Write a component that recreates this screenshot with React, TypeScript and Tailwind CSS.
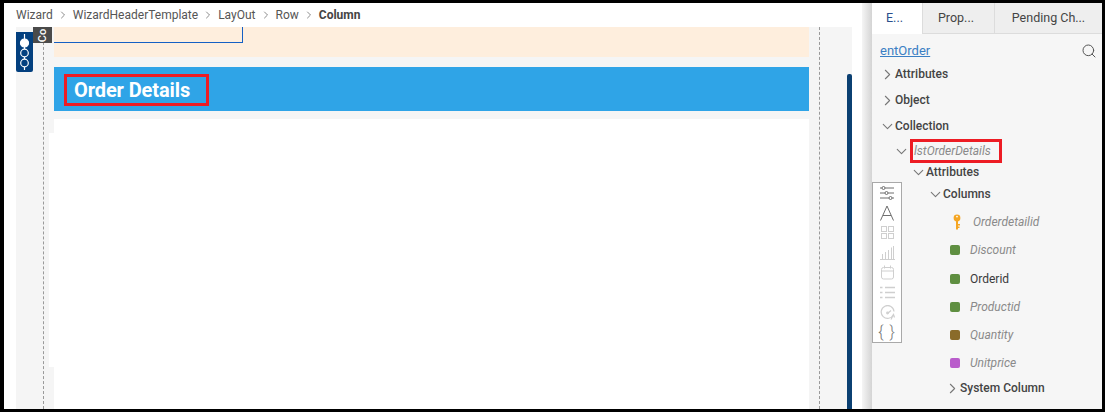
import { ChevronDown, ChevronRight, Search } from "lucide-react";

const crumbs = ["Wizard", "WizardHeaderTemplate", "LayOut", "Row"];

const KeyIcon = () => (
  <svg width="8" height="16" viewBox="0 0 8 16" className="ml-[3px]">
    <circle cx="4" cy="4" r="3.4" fill="#f5a623" />
    <circle cx="4" cy="2.6" r="0.9" fill="#fff" />
    <path d="M3 6h2v9.5H3zM5 10h2v1.5H5zM5 12.5h1.5V14H5z" fill="#f5a623" />
  </svg>
);

const Tool = ({ children }: { children: React.ReactNode }) => (
  <div className="flex h-[20px] items-center justify-center">{children}</div>
);

const Caret = ({ open }: { open?: boolean }) => (
  <span className="flex w-[15px] shrink-0 justify-center">
    {open ? (
      <ChevronDown size={17} strokeWidth={1.5} color="#777" className="shrink-0" />
    ) : (
      <ChevronRight size={17} strokeWidth={1.5} color="#777" className="shrink-0" />
    )}
  </span>
);

const ToolStrip = () => (
  <div className="absolute left-0 top-[179px] flex h-[161px] w-[30px] flex-col border border-[#a9a9a9] bg-white">
    <Tool>
      <svg width="16" height="16" viewBox="0 0 16 16" fill="none" stroke="#6f6f6f">
        <path d="M1 3h2M6 3h9M1 8h5M9 8h6M1 13h9M13 13h2" />
        <circle cx="4.5" cy="3" r="1.5" />
        <circle cx="7.5" cy="8" r="1.5" />
        <circle cx="11.5" cy="13" r="1.5" />
      </svg>
    </Tool>
    <Tool>
      <svg width="16" height="16" viewBox="0 0 16 16" fill="none" stroke="#6f6f6f">
        <path d="M1.5 15.5 8 1l6.500 14.500M4 10.500h8" />
      </svg>
    </Tool>
    <Tool>
      <svg width="15" height="15" viewBox="0 0 15 15" fill="none" stroke="#cfcfcf">
        <rect x="1.500" y="1.500" width="5" height="5" />
        <rect x="8.500" y="1.500" width="5" height="5" />
        <rect x="1.500" y="8.500" width="5" height="5" />
        <rect x="8.500" y="8.500" width="5" height="5" />
      </svg>
    </Tool>
    <Tool>
      <svg width="15" height="15" viewBox="0 0 15 15" fill="none" stroke="#cfcfcf">
        <path d="M0 14.500h15M2.500 14V9M5.500 14V7M8.500 14V5M11.500 14V2.500M13.500 14V1" />
      </svg>
    </Tool>
    <Tool>
      <svg width="15" height="15" viewBox="0 0 15 15" fill="none" stroke="#cfcfcf">
        <rect x="1.500" y="2.500" width="12" height="11.500" rx="2" />
        <path d="M1.500 6h12M4.500 0.500v3M10.500 0.500v3" />
      </svg>
    </Tool>
    <Tool>
      <svg width="15" height="15" viewBox="0 0 15 15" fill="none" stroke="#cfcfcf" strokeWidth="1.500">
        <path d="M0 2.500h2.500M5 2.500h10M0 7.500h2.500M5 7.500h10M0 12.500h2.500M5 12.500h10" />
      </svg>
    </Tool>
    <Tool>
      <svg width="15" height="15" viewBox="0 0 15 15" fill="none" stroke="#cfcfcf" strokeWidth="1.200">
        <path d="M13.500 9.500A6.400 6.400 0 1 1 14 6.500M7.500 8.500 11 5.500M11 14.500l2.500-5 1 3" />
        <circle cx="7.500" cy="8" r="0.800" />
      </svg>
    </Tool>
    <Tool>
      <span className="text-[16px] font-light leading-none tracking-[1px] text-[#777]">{"{ }"}</span>
    </Tool>
  </div>
);

type Field = { label: string; color: string; height: string; plain?: boolean };

const fields: Field[] = [
  { label: "Discount", color: "bg-[#5f8f41]", height: "h-[28px]" },
  { label: "Orderid", color: "bg-[#5f8f41]", height: "h-[29px]", plain: true },
  { label: "Productid", color: "bg-[#5f8f41]", height: "h-[28px]" },
  { label: "Quantity", color: "bg-[#8a6b2a]", height: "h-[28px]" },
  { label: "Unitprice", color: "bg-[#b95ccb]", height: "h-[28px]" },
];

const Tree = () => (
  <div className="text-[12px] font-medium text-[#444]">
    <div className="flex h-[20px] items-center justify-between pl-[8px] pr-[5px]">
      <a className="text-[13px] font-normal text-[#3b7fc4] underline">entOrder</a>
      <Search size={16} strokeWidth={1.5} color="#555" />
    </div>
    <div className="flex h-[26px] items-center pl-[8px]">
      <Caret />
      Attributes
    </div>
    <div className="flex h-[26px] items-center pl-[8px]">
      <Caret />
      Object
    </div>
    <div className="flex h-[26px] items-center pl-[8px]">
      <Caret open />
      Collection
    </div>
    <div className="flex h-[24px] items-center gap-[1px] pl-[22px]">
      <Caret open />
      <span className="flex h-[24px] w-[92px] items-center border-[3px] border-[#ed1c24] pb-[1px] pl-[1px] text-[12px] font-normal italic text-[#8a8a8a]">
        lstOrderDetails
      </span>
    </div>
    <div className="flex h-[17px] items-center pl-[39px] pt-[1px]">
      <Caret open />
      Attributes
    </div>
    <div className="flex h-[28px] items-center pl-[56px]">
      <Caret open />
      Columns
    </div>
    <div className="flex h-[28px] items-center pl-[78px] font-normal italic text-[#8a8a8a]">
      <span className="flex w-[23px] items-center">
        <KeyIcon />
      </span>
      Orderdetailid
    </div>
    {fields.map((f) => (
      <div key={f.label} className={`flex ${f.height} items-center gap-[10px] pl-[78px] font-normal`}>
        <span className={`size-[10px] rounded-[2px] ${f.color}`} />
        <span className={f.plain ? "text-[#3a3a3a]" : "italic text-[#8a8a8a]"}>{f.label}</span>
      </div>
    ))}
    <div className="flex h-[22px] items-center pl-[73px]">
      <Caret />
      System Column
    </div>
  </div>
);

export default function App() {
  return (
    <div className="flex h-[412px] w-[1105px] overflow-hidden border-b-[3px] border-l-4 border-r-[3px] border-t-[3px] border-black bg-white font-['Roboto',sans-serif]">
      <div className="flex w-[848px] flex-col pl-[12px]">
        <div className="flex h-[24px] items-center text-[12px] text-[#555]">
          {crumbs.map((c) => (
            <span key={c} className="flex items-center">
              {c}
              <ChevronRight size={12} strokeWidth={1.5} color="#666" className="mx-[4px]" />
            </span>
          ))}
          <span className="font-bold text-[#444]">Column</span>
        </div>

        <div className="relative flex min-h-0 flex-1 justify-between bg-[#f5f5f5] pl-[27px]">
          <div className="absolute left-0 top-[5px] flex h-[40px] w-[17px] items-center justify-center rounded-b-[2px] bg-[#03407f]">
            <svg width="13" height="36" viewBox="0 0 13 36" fill="none" stroke="#fff" strokeWidth="1.2">
              <path d="M6.500 0v5M6.500 13v2M6.500 23v2M6.500 33v3" />
              <circle cx="6.500" cy="9" r="4" fill="#fff" />
              <circle cx="6.500" cy="19" r="3.800" />
              <circle cx="6.500" cy="29" r="3.800" />
            </svg>
          </div>
          <div className="absolute left-[17px] top-0 z-10 flex h-[16px] w-[19px] items-center justify-center bg-[#4a4a4a]">
            <span className="-rotate-90 text-[11px] font-medium leading-none text-white">Co</span>
          </div>

          <div className="flex w-[777px] flex-col border-x border-dashed border-x-[#9a9a9a] px-[10px]">
            <div className="h-[30px] bg-[#feeedd]">
              <div className="h-[16px] w-[189px] border-b border-r border-[#1560c4]" />
            </div>
            <div className="mt-[10px] h-[44px] bg-[#2fa4e7] pl-[10px] pt-[7px]">
              <div className="flex h-[32px] w-[145px] items-center border-[3px] border-[#ed1c24] pl-[7px] text-[20px] font-bold leading-none tracking-[-0.1px] text-white">
                Order Details
              </div>
            </div>
            <div className="mt-[8px] flex flex-1 flex-col">
              <div className="h-[14px] bg-white" />
              <div className="-ml-[5px] h-[234px] bg-white" />
              <div className="flex-1 bg-white" />
            </div>
          </div>

          <div className="mt-[47px] w-[5px] rounded-t-[2px] bg-[#0b4072]" />
        </div>
      </div>

      <div className="w-[10px]" />
      <div className="w-[10px] bg-gradient-to-r from-[#f5f5f5] to-[#d4d4d4]" />
      <div className="relative flex-1 bg-[#f6f6f6]">
        <div className="flex h-[31px] text-[12.5px]">
          <div className="flex w-[51px] items-center justify-center border-r border-[#dcdcdc] bg-white pr-[5px] text-[#2b4f8c]">E...</div>
          <div className="flex w-[72px] items-center justify-center border-b border-r border-[#dcdcdc] bg-[#eeeeee] pr-[5px] text-[#444]">Prop...</div>
          <div className="flex flex-1 items-center justify-center border-b border-[#dcdcdc] bg-[#eeeeee] text-[#444]">Pending Ch...</div>
        </div>
        <div className="pt-[7px]">
          <Tree />
        </div>
        <ToolStrip />
      </div>
    </div>
  );
}
